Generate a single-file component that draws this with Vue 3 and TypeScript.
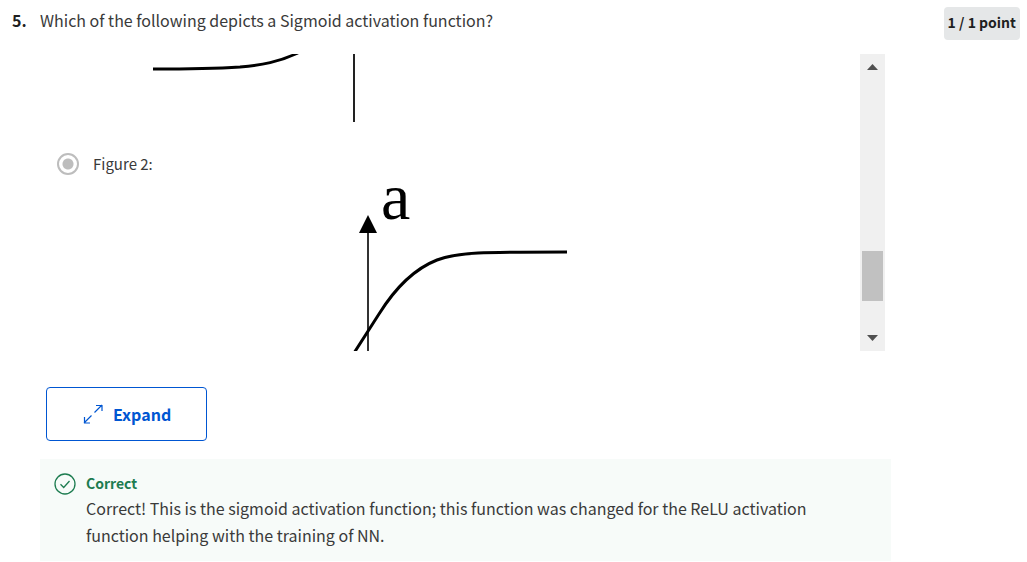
<script setup lang="ts">
import { ref } from 'vue'

interface Question {
  index: number
  prompt: string
  score: string
}

const question: Question = {
  index: 5,
  prompt: 'Which of the following depicts a Sigmoid activation function?',
  score: '1 / 1 point',
}
const selected = ref<string>('figure-2')
</script>

<template>
  <main class="page">
    <header class="header">
      <span class="number">{{ question.index }}.</span>
      <h1 class="prompt">{{ question.prompt }}</h1>
      <span class="score">{{ question.score }}</span>
    </header>

    <section class="viewer">
      <div class="options">
        <svg class="figure" width="320" height="70" viewBox="0 0 320 70" aria-hidden="true">
          <path d="M57 15 C95 15 120 14.500 144 13 C166 11 183 8 202 -1" fill="none" stroke="#000" stroke-width="3" />
          <path d="M258 0 V68" stroke="#222" stroke-width="2" />
        </svg>
        <label class="choice">
          <input v-model="selected" type="radio" name="figure" value="figure-2" />
          <span>Figure 2:</span>
        </label>
        <svg class="figure sigmoid" width="480" height="172" viewBox="0 0 480 172" aria-hidden="true">
          <clipPath id="plot"><rect width="480" height="172" /></clipPath>
          <g clip-path="url(#plot)">
            <path d="M272 50 V172" stroke="#333" stroke-width="2" />
            <path d="M272 36 L281 54 H263 Z" fill="#000" />
            <path d="M258 174 L283 135 C298 111 318 90 341 81 C361 73 387 73 471 73" fill="none" stroke="#000" stroke-width="3" />
          </g>
          <text class="axis" x="285" y="40">a</text>
        </svg>
      </div>
      <div class="scrollbar">
        <button class="arrow" type="button" aria-label="Scroll up">
          <svg width="11" height="6" viewBox="0 0 11 6"><path d="M0 6 L5.500 0 L11 6 Z" fill="#505050" /></svg>
        </button>
        <div class="track"><div class="thumb"></div></div>
        <button class="arrow" type="button" aria-label="Scroll down">
          <svg width="11" height="6" viewBox="0 0 11 6"><path d="M0 0 H11 L5.500 6 Z" fill="#505050" /></svg>
        </button>
      </div>
    </section>

    <button class="expand" type="button">
      <svg width="20" height="20" viewBox="0 0 20 20" fill="none" stroke="#0056d2" stroke-width="1.200" aria-hidden="true">
        <path d="M11.500 8.500 L19 1 M13 1.500 H19 V7 M8.500 11.500 L1 19 M1.500 13 V19 H7" />
      </svg>
      <span>Expand</span>
    </button>

    <section class="feedback">
      <svg class="check" width="22" height="22" viewBox="0 0 22 22" fill="none" stroke="#1d7c50" stroke-width="1.300" aria-hidden="true">
        <circle cx="11" cy="11" r="10" />
        <path d="M6.500 11.300 L9.700 14.500 L15.500 8" />
      </svg>
      <div>
        <h2 class="verdict">Correct</h2>
        <p class="explanation">
          Correct! This is the sigmoid activation function; this function was changed for the ReLU activation function
          helping with the training of NN.
        </p>
      </div>
    </section>
  </main>
</template>

<style>
body {
  margin: 0;
  background: #fff;
}
</style>

<style scoped>
.page {
  box-sizing: border-box;
  padding-top: 7px;
  color: #3a3a3a;
  font-family: "Noto Sans CJK SC", "Open Sans", sans-serif;
  font-size: 16px;
}
.header {
  display: flex;
  align-items: flex-start;
  padding: 0 7px 0 12px;
}
.number {
  flex: 0 0 28px;
  color: #1f1f1f;
  font-weight: 700;
  line-height: 26px;
}
.prompt {
  flex: 1;
  margin: 0;
  font-size: 16px;
  font-weight: 400;
  line-height: 26px;
}
.score {
  padding: 0 4px 2px;
  border-radius: 4px;
  background: #e5e7e8;
  color: #1f1f1f;
  font-size: 14px;
  font-weight: 700;
  line-height: 31px;
}
.viewer {
  display: flex;
  margin: 14px 142px 0 40px;
}
.options {
  flex: 1;
  min-width: 0;
}
.figure {
  display: block;
  margin-left: 56px;
}
.sigmoid {
  overflow: visible;
}
.axis {
  font-family: "Liberation Serif", serif;
  font-size: 66px;
}
.choice {
  display: flex;
  align-items: center;
  gap: 14px;
  margin: 26px 0 1px 17px;
  font-size: 15px;
  line-height: 28px;
}
.choice input {
  appearance: none;
  box-sizing: border-box;
  width: 22px;
  height: 22px;
  margin: 0;
  border: 2px solid #bdbdbd;
  border-radius: 50%;
  background: radial-gradient(circle, #bdbdbd 5px, transparent 6px);
}
.scrollbar {
  display: flex;
  flex-direction: column;
  width: 25px;
  background: #f0f0f0;
}
.arrow {
  display: flex;
  align-items: center;
  justify-content: center;
  height: 26px;
  padding: 0;
  border: 0;
  background: transparent;
}
.track {
  display: flex;
  flex: 1;
  flex-direction: column;
  justify-content: flex-end;
  padding: 0 2px 24px;
}
.thumb {
  height: 50px;
  background: #c1c1c1;
}
.expand {
  display: flex;
  align-items: center;
  gap: 10px;
  margin: 36px 0 0 46px;
  padding: 12px 35px 12px 36px;
  border: 1px solid #0056d2;
  border-radius: 4px;
  background: #fff;
  color: #0056d2;
  font-family: inherit;
  font-size: 16px;
  font-weight: 700;
  line-height: 28px;
}
.feedback {
  display: flex;
  gap: 10px;
  margin: 18px 136px 0 40px;
  padding: 13px 40px 12px 14px;
  background: #f7fbf9;
}
.check {
  flex: none;
  margin-top: 1px;
}
.verdict {
  margin: 0;
  color: #1d7c50;
  font-size: 14px;
  font-weight: 700;
  line-height: 23px;
}
.explanation {
  margin: 0;
  line-height: 27px;
}
</style>
